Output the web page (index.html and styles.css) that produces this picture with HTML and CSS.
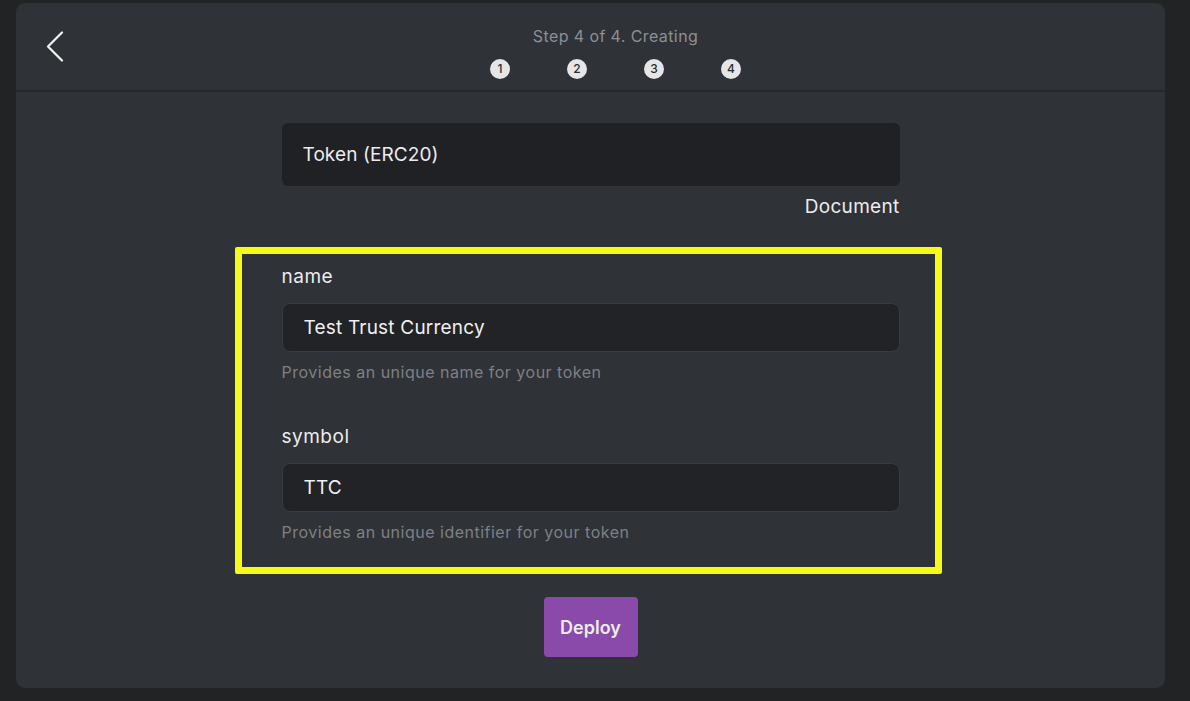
FILE: index.html
```html
<!DOCTYPE html>
<html lang="en">
<head>
<meta charset="utf-8">
<title>Step 4 of 4. Creating</title>
<link rel="stylesheet" href="styles.css">
</head>
<body>
<div class="card">
  <header class="header">
    <button class="back" aria-label="Back">
      <svg width="20" height="32" viewBox="0 0 20 32"><path d="M16 1.5 L2 15.5 L16 29.5" fill="none" stroke="#f2f2f2" stroke-width="2.2" stroke-linecap="round" stroke-linejoin="round"/></svg>
    </button>
    <div class="steps">
      <div class="step-title">Step 4 of 4. Creating</div>
      <div class="step-dots">
        <span class="dot">1</span>
        <span class="dot">2</span>
        <span class="dot">3</span>
        <span class="dot">4</span>
      </div>
    </div>
  </header>
  <main class="main">
    <div class="column">
      <div class="select">Token (ERC20)</div>
      <div class="doc-row"><a class="doc-link">Document</a></div>
      <div class="highlight">
        <div class="field">
          <label class="label">name</label>
          <div class="input">Test Trust Currency</div>
          <div class="hint">Provides an unique name for your token</div>
        </div>
        <div class="field field-second">
          <label class="label">symbol</label>
          <div class="input">TTC</div>
          <div class="hint">Provides an unique identifier for your token</div>
        </div>
      </div>
      <div class="actions">
        <button class="deploy">Deploy</button>
      </div>
    </div>
  </main>
</div>
</body>
</html>
```

FILE: styles.css
```css
* { box-sizing: border-box; }
html, body { margin: 0; height: 100%; }
body {
  background: #222325;
  font-family: "Inter", "Noto Sans", "Liberation Sans", sans-serif;
  color: #ececee;
  padding: 3px 25px 13px 16px;
  display: flex;
}
.card {
  flex: 1;
  background: #2f3237;
  border-radius: 9px;
  display: flex;
  flex-direction: column;
}
.header {
  height: 89px;
  border-bottom: 2px solid #26282b;
  display: flex;
  align-items: center;
  padding: 0 16px;
}
.back {
  width: 50px;
  height: 40px;
  background: none;
  border: 0;
  padding: 0 0 0 14px;
  display: flex;
  align-items: center;
  cursor: pointer;
}
.steps {
  flex: 1;
  display: flex;
  flex-direction: column;
  align-items: center;
  padding-top: 11px;
}
.step-title {
  font-size: 16px;
  line-height: 20px;
  letter-spacing: 0.4px;
  color: #8d8f94;
}
.step-dots {
  display: flex;
  gap: 57px;
  margin-top: 13px;
}
.dot {
  width: 20px;
  height: 20px;
  border-radius: 50%;
  background: #e6e6e9;
  color: #2a2c30;
  font-size: 12px;
  font-weight: 500;
  display: flex;
  align-items: center;
  justify-content: center;
}
.main {
  display: flex;
  justify-content: center;
  padding: 31px 0 31px;
}
.column {
  width: 618px;
  display: flex;
  flex-direction: column;
}
.select {
  height: 63px;
  background: #202124;
  border-radius: 6px;
  display: flex;
  align-items: center;
  padding-left: 21px;
  font-size: 19px;
  letter-spacing: 0.1px;
  color: #ececee;
}
.doc-row {
  display: flex;
  justify-content: flex-end;
  margin-top: 10px;
}
.doc-link {
  font-size: 19px;
  line-height: 22px;
  letter-spacing: 0.3px;
  color: #ececee;
}
.highlight {
  margin: 29px -42px 0 -47px;
  border: 7px solid #f6fa1a;
  border-radius: 2px;
  padding: 12px 35px 25px 40px;
}
.field { display: flex; flex-direction: column; }
.field-second { margin-top: 44px; }
.label {
  font-size: 19px;
  line-height: 22px;
  letter-spacing: 0.5px;
  color: #ececee;
}
.input {
  margin-top: 15px;
  height: 49px;
  background: #222326;
  border: 1px solid #383b40;
  border-radius: 8px;
  display: flex;
  align-items: center;
  padding-left: 21px;
  font-size: 19px;
  letter-spacing: 0.2px;
  color: #f0f0f2;
}
.hint {
  margin-top: 10px;
  font-size: 16px;
  line-height: 20px;
  letter-spacing: 0.5px;
  color: #7e8085;
}
.actions {
  display: flex;
  justify-content: center;
  margin-top: 23px;
}
.deploy {
  width: 94px;
  height: 60px;
  background: #8a4aa9;
  border: 0;
  border-radius: 4px;
  color: #ececf0;
  font-family: inherit;
  font-size: 18px;
  font-weight: 600;
  cursor: pointer;
}
```
